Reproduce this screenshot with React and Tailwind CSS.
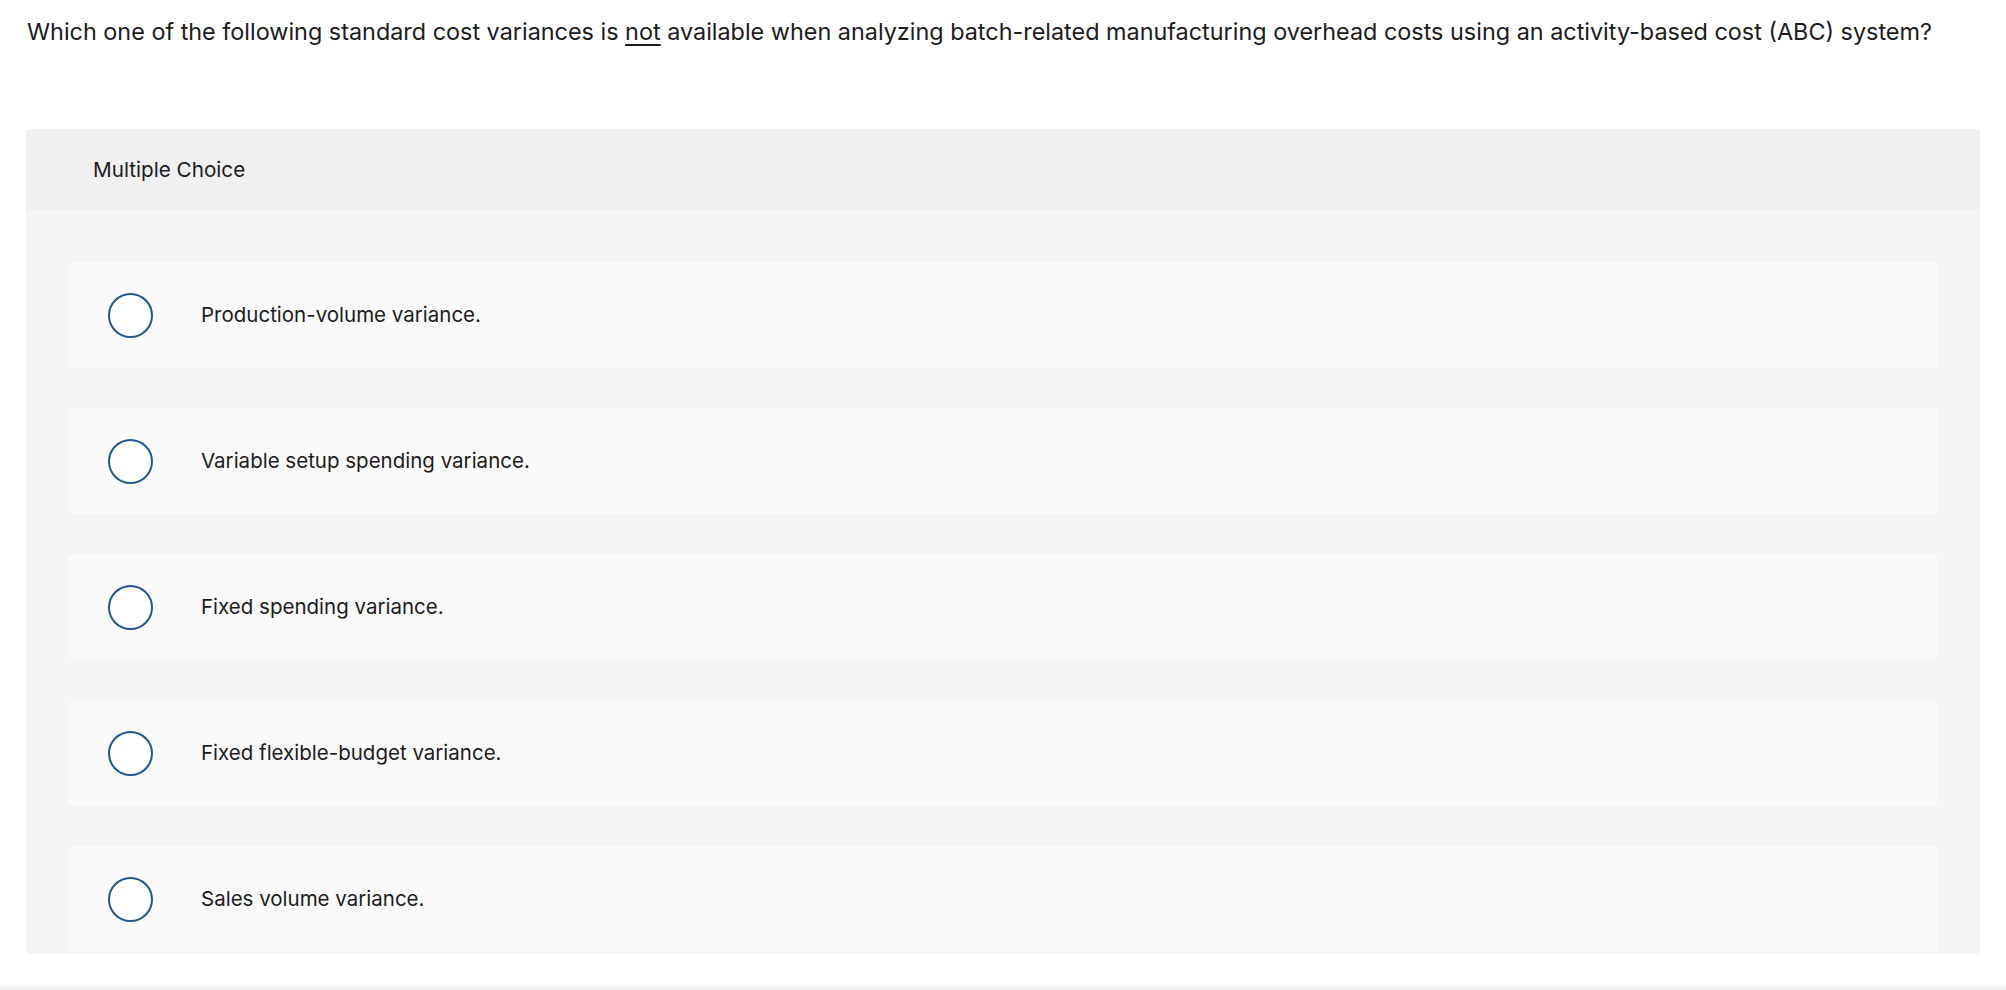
import React from "react";

const OPTIONS = [
  "Production-volume variance.",
  "Variable setup spending variance.",
  "Fixed spending variance.",
  "Fixed flexible-budget variance.",
  "Sales volume variance.",
];

function Choice({ label }) {
  return (
    <li className="flex items-center h-[106px] rounded-[6px] bg-[#fafafa] pl-[40px]">
      <span className="inline-block w-[45px] h-[45px] rounded-full border-2 border-[#22588f] bg-white shrink-0" />
      <span className="ml-[48px] text-[20.5px] text-[#1c1c1c]">{label}</span>
    </li>
  );
}

export default function App() {
  return (
    <div className="bg-white min-h-[990px] font-['Inter','Noto_Sans',sans-serif]">
      <div className="px-[26px] pt-[16px]">
        <p className="text-[23.4px] leading-[32px] text-[#1c1c1c] pl-[1px]">
          Which one of the following standard cost variances is <u className="underline-offset-4">not</u> available when
          analyzing batch-related manufacturing overhead costs using an activity-based cost (ABC) system?
        </p>

        <div className="mt-[81px] rounded-[4px] overflow-hidden">
          <div className="h-[81px] flex items-center bg-[#f0f0f0] pl-[67px] text-[20.7px] text-[#1c1c1c]">
            Multiple Choice
          </div>
          <ul className="bg-[#f5f5f5] px-[42px] pt-[52px] pb-[2px] flex flex-col gap-[40px]">
            {OPTIONS.map((o) => (
              <Choice key={o} label={o} />
            ))}
          </ul>
        </div>
      </div>
      <div className="mt-[32px] h-[4px] bg-[#f0f0f0]" />
    </div>
  );
}
